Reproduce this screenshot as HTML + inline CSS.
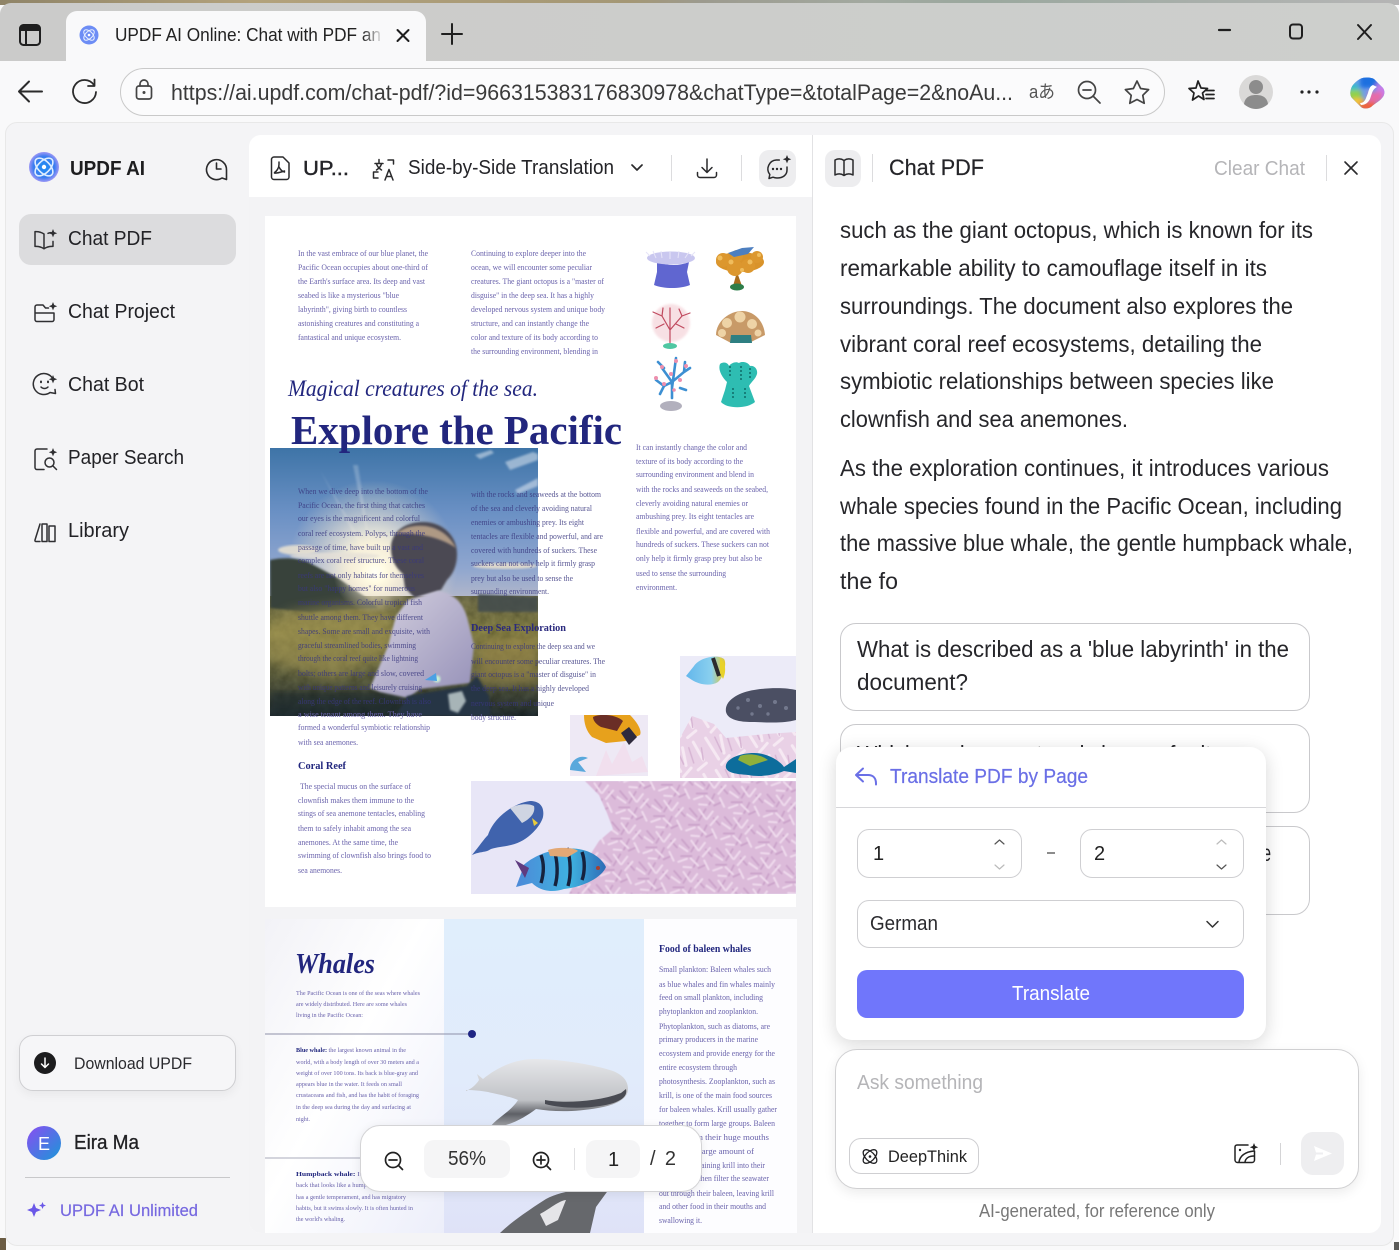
<!DOCTYPE html>
<html lang="en"><head><meta charset="utf-8"><title>UPDF AI Online: Chat with PDF</title>
<style>
html,body{margin:0;padding:0;background:#f9f9f9}
#w{position:relative;width:1399px;height:1250px;overflow:hidden;background:#f9f9fa;font-family:"Liberation Sans",sans-serif}
.a{position:absolute;box-sizing:border-box}
svg.l{position:absolute;left:0;top:0;width:1399px;height:1250px;pointer-events:none}
svg text{font-family:"Liberation Sans",sans-serif}
.pt text{font-family:"Liberation Serif",serif}
</style></head><body><div id="w">
<div class="a" style="left:0;top:0;width:1399px;height:5px;background:linear-gradient(90deg,#8f8468,#b3a27c 18%,#a49775 45%,#9c9a8e 50%,#a2a9a0 62%,#9aa89e 70%,#b5b5b5 100%)"></div>
<div class="a" style="left:0;top:3px;width:1399px;height:58px;background:linear-gradient(90deg,#cbcbca,#cdcfcc);border-radius:11px 11px 0 0"></div>
<div class="a" style="left:0;top:61px;width:1399px;height:1189px;background:#f9f9fa"></div>
<div class="a" style="left:66px;top:11px;width:360px;height:50px;background:#f9f9fa;border-radius:11px 11px 0 0"></div>
<div class="a" style="left:120px;top:68px;width:1045px;height:48px;border:1px solid #c9c9c9;border-radius:24px;background:#fbfbfc"></div>
<div class="a" style="left:0;top:1238px;width:6px;height:12px;background:#6b5c44"></div>
<div class="a" style="left:1394px;top:1242px;width:5px;height:8px;background:#5a5a58"></div>
<div class="a" style="left:5px;top:122px;width:1389px;height:1124px;background:#f4f4f6;border:1px solid #e8e8e8;border-radius:12px"></div>
<div class="a" style="left:249px;top:135px;width:1132px;height:1098px;background:#fff;border-radius:12px;overflow:hidden">
  <div class="a" style="left:0;top:0;width:563px;height:1098px;background:#f3f3f5"></div>
  <div class="a" style="left:0;top:0;width:563px;height:62px;background:#fff"></div>
  <div class="a" style="left:563px;top:0;width:1px;height:1098px;background:#e2e2e4"></div>
</div>
<div class="a" style="left:19px;top:214px;width:217px;height:51px;background:#dcdcde;border-radius:12px"></div>
<div class="a" style="left:19px;top:1035px;width:217px;height:56px;background:#f6f6f8;border:1px solid #cfcfd2;border-radius:14px;box-shadow:0 4px 10px rgba(0,0,0,.05)"></div>
<div class="a" style="left:25px;top:1177px;width:205px;height:1px;background:#c8c8ca"></div>

<!-- PDF pages -->
<svg class="l" viewBox="0 0 1399 1250" xmlns="http://www.w3.org/2000/svg">
<defs>
<linearGradient id="sky" x1="0" y1="0" x2="0" y2="1"><stop offset="0" stop-color="#3e74a7"/><stop offset=".4" stop-color="#6a90c4"/><stop offset=".75" stop-color="#8fa6cf"/><stop offset="1" stop-color="#bdbcc8"/></linearGradient>
<radialGradient id="sun"><stop offset="0" stop-color="#fffff6"/><stop offset=".25" stop-color="#fffbe2" stop-opacity=".98"/><stop offset=".55" stop-color="#f3e9d5" stop-opacity=".6"/><stop offset="1" stop-color="#e8dcc8" stop-opacity="0"/></radialGradient>
<linearGradient id="gr" x1="0" y1="0" x2="0" y2="1"><stop offset="0" stop-color="#77744f"/><stop offset=".3" stop-color="#8a8548"/><stop offset=".65" stop-color="#666744"/><stop offset="1" stop-color="#242f33"/></linearGradient>
<linearGradient id="shirt" x1="0" y1="0" x2="1" y2="1"><stop offset="0" stop-color="#d6d2e0"/><stop offset="1" stop-color="#9590b8"/></linearGradient>
<linearGradient id="left2" x1="0" y1="0" x2="1" y2="1"><stop offset="0" stop-color="#f2f2f7"/><stop offset=".45" stop-color="#fff"/><stop offset="1" stop-color="#eceefa"/></linearGradient>
<linearGradient id="mid2" x1="0" y1="0" x2="0" y2="1"><stop offset="0" stop-color="#e0eefc"/><stop offset=".5" stop-color="#e1ebfb"/><stop offset="1" stop-color="#dfe2f7"/></linearGradient>
<linearGradient id="whale" x1="0" y1="0" x2="0" y2="1"><stop offset="0" stop-color="#e6e7ea"/><stop offset=".6" stop-color="#bfc1c5"/><stop offset=".8" stop-color="#5e6066"/><stop offset="1" stop-color="#a9abb0"/></linearGradient>
<linearGradient id="fa" x1="0" y1="0" x2="1" y2="0"><stop offset="0" stop-color="#4c89d8"/><stop offset=".6" stop-color="#3fb2e0"/><stop offset="1" stop-color="#2d6cb6"/></linearGradient>
<linearGradient id="fb" x1="0" y1="0" x2="1" y2="0"><stop offset="0" stop-color="#63b7ec"/><stop offset=".65" stop-color="#8ad0ee"/><stop offset="1" stop-color="#e8c926"/></linearGradient>
<pattern id="cor" width="58" height="52" patternUnits="userSpaceOnUse" patternTransform="rotate(14) scale(.62)">
<rect width="58" height="52" fill="#dcbbda"/>
<g stroke-linecap="round" fill="none">
<g stroke="#cba3ca" stroke-width="3"><path d="M3 8l14 10M28 3l-6 20M44 14l12 8M8 34l16-4M36 28l-4 18M50 38l-10 8"/></g>
<g stroke="#eed9ec" stroke-width="3.400"><path d="M0 18l16 6M18 6l14 12M40 4l-6 14M50 10l-8 16M6 44l12-8M24 34l14 8M46 32l10 12M28 48l-12 2"/></g>
</g></pattern>
<pattern id="cor2" width="40" height="34" patternUnits="userSpaceOnUse" patternTransform="rotate(-18)">
<rect width="40" height="34" fill="#e9d1e6"/>
<g stroke-linecap="round" fill="none"><g stroke="#f6e9f3" stroke-width="3"><path d="M3 2l6 24M18 4l-2 18M30 2l4 20M10 32l10-6M26 30l10-4"/></g><g stroke="#d6b4d3" stroke-width="1.400"><path d="M12 4l2 16M24 6l0 16M36 10l-2 12"/></g></g></pattern>
<filter id="rough" x="0" y="0" width="100%" height="100%"><feTurbulence type="fractalNoise" baseFrequency=".1" numOctaves="3" seed="4"/><feColorMatrix values="0 0 0 0 .1  0 0 0 0 .12  0 0 0 0 .05  .75 0 0 0 -.12"/><feComposite in2="SourceGraphic" operator="in"/><feBlend in2="SourceGraphic" mode="multiply"/></filter>
<filter id="b1"><feGaussianBlur stdDeviation="1"/></filter>
<filter id="b3"><feGaussianBlur stdDeviation="3"/></filter>
<filter id="b6"><feGaussianBlur stdDeviation="6"/></filter>
<filter id="s"><feGaussianBlur stdDeviation=".35"/></filter>
<filter id="s2"><feGaussianBlur stdDeviation=".6"/></filter>
<clipPath id="cp1"><rect x="270" y="448" width="268" height="268"/></clipPath>
<clipPath id="cpA"><rect x="680" y="656" width="116" height="122"/></clipPath>
<clipPath id="cpB"><rect x="570" y="715" width="78" height="61"/></clipPath>
<clipPath id="cpC"><rect x="471" y="781" width="325" height="113"/></clipPath>
<clipPath id="cpP"><rect x="249" y="190" width="563" height="1043"/></clipPath>
</defs>
<g clip-path="url(#cpP)">
<rect x="265" y="216" width="532" height="691" fill="#fff"/>
<rect x="265" y="919" width="532" height="320" fill="#fff"/>
<rect x="265" y="919" width="179" height="320" fill="url(#left2)"/>
<rect x="444" y="919" width="200" height="320" fill="url(#mid2)"/>
<rect x="644" y="919" width="153" height="320" fill="#fdfdff"/>

<!-- photo -->
<g clip-path="url(#cp1)">
<rect x="270" y="448" width="268" height="160" fill="url(#sky)"/>
<g fill="#fff" opacity=".45" filter="url(#b1)"><path d="M475 455l16-5 3 3-14 6zM505 462l28-10 5 2v6l-28 10zM515 490l23-12v8l-20 8z"/></g>
<g fill="#fff" opacity=".22" filter="url(#b1)"><path d="M320 470l50 95 4-2zM373 565l-20-100 5 0z"/></g>
<circle cx="373" cy="565" r="85" fill="url(#sun)"/>
<rect x="270" y="596" width="268" height="120" fill="url(#gr)" filter="url(#rough)"/>
<path d="M270 560c14-3 28-2 38 2l30 16 26 18 14 12-70 4-38-4z" fill="#39433a" filter="url(#b1)"/>
<path d="M478 594l60 3v15h-60z" fill="#434b4e" opacity=".85" filter="url(#b1)"/>
<path d="M290 612l70-10 30 10 4 40-60 28-70-20v-30z" fill="#a89a55" opacity=".55" filter="url(#b6)"/>
<path d="M478 640l60-6v50h-60z" fill="#a18d4c" opacity=".6" filter="url(#b6)"/>
<path d="M270 692h130v24H270z" fill="#1f2b2e" opacity=".55" filter="url(#b3)"/>
<circle cx="375" cy="572" r="42" fill="url(#sun)"/>
<ellipse cx="298" cy="550" rx="20" ry="5" fill="#ece4d2" opacity=".85" filter="url(#b1)"/>
<ellipse cx="335" cy="556" rx="45" ry="3.500" fill="#e6e1d8" opacity=".8" filter="url(#b1)"/>
<ellipse cx="505" cy="566" rx="32" ry="3" fill="#ece2cc" opacity=".85" filter="url(#b1)"/>
<path d="M391 548c0-16 14-26 32-26 20 0 34 14 34 32 0 12-4 20-10 26l-6 10-26 8-10-10-2-14c-7-6-12-14-12-26z" fill="#4b4a52" filter="url(#b1)"/>
<path d="M396 534c12-12 46-14 60 14-14-10-38-16-60-14z" fill="#b9a28a" opacity=".9" filter="url(#b1)"/>
<path d="M408 600l30-9c16 2 26 12 30 30l6 24-4 38-50 6-12 9-28-6-10-4 18-42 8-30z" fill="url(#shirt)" filter="url(#b1)"/>
<path d="M407 696l60-10 10-10 12 20 2 20H396z" fill="#263445" filter="url(#b1)"/>
<path d="M448 694l14-3 4 10-8 12-8-3z" fill="#c8d4d4" opacity=".8" filter="url(#b1)"/>
<circle cx="437" cy="679" r="3.500" fill="#c9f2d6" filter="url(#b1)"/>
<path d="M425 680l11-7 1 8z" fill="#4ba0e4"/>
</g>

<!-- corals -->
<g filter="url(#s)">
<path d="M657 262c12 4 22 4 32 0l-2 10 3 13c-10 4-26 4-36 0l3-13z" fill="#6166d0"/>
<ellipse cx="671" cy="258" rx="24" ry="6.500" fill="#c9c7ef"/>
<g stroke="#e6e4f8" stroke-width="1" fill="none"><path d="M650 256l-4-4M656 258l-3-7M662 258l-1-7M670 259v-8M678 258l1-7M685 258l4-6M691 256l4-4"/></g>
<path d="M737 272l5 14h-9z" fill="#a86c1f"/><ellipse cx="737" cy="287" rx="7" ry="3.500" fill="#2d7d4a"/>
<ellipse cx="740" cy="262" rx="24" ry="10" fill="#d9932c"/>
<g fill="#dc972f"><circle cx="723" cy="260" r="7"/><circle cx="735" cy="268" r="8"/><circle cx="748" cy="266" r="7"/><circle cx="757" cy="257" r="6"/><circle cx="737" cy="256" r="6"/></g>
<g fill="#f0bd5d"><circle cx="720" cy="258" r="2.500"/><circle cx="731" cy="262" r="2.500"/><circle cx="750" cy="262" r="2.500"/><circle cx="759" cy="255" r="2"/><circle cx="742" cy="270" r="2"/></g>
<path d="M728 253l14-5 12-1-6 7-14 3z" fill="#4d7fc0"/>
<circle cx="671" cy="323" r="19" fill="#f6d9de" opacity=".8" filter="url(#b1)"/>
<g stroke="#c04a5e" stroke-width="1.200" fill="none" stroke-linecap="round"><path d="M670 344v-14l-8-14M670 330l12-14M662 316l-9-4M662 316l1-8M682 316l8-3M682 316l-3-7M670 330v-22M656 328l8-4M684 328l-8-4"/></g>
<ellipse cx="670" cy="346" rx="7" ry="3" fill="#4fc7a2"/>
<path d="M716 335c0-14 14-24 26-24s22 10 23 24l-16 8h-18z" fill="#c89a67"/>
<g fill="#eed3a6"><circle cx="727" cy="323" r="5"/><circle cx="740" cy="317" r="5.500"/><circle cx="752" cy="324" r="5"/><circle cx="722" cy="333" r="4"/><circle cx="758" cy="333" r="3.500"/></g>
<path d="M731 335h20l1 8h-22z" fill="#2d7f82"/>
<g stroke="#3d8fd2" stroke-width="2.600" fill="none" stroke-linecap="round"><path d="M672 398v-16l-10-14M672 382l12-10 1-10M672 382l-8 4-8-6M684 372l6-4M664 368l-6-6M672 388l4-30M664 386l-4 8M680 388l6 2"/></g>
<g fill="#ee8fad"><circle cx="662" cy="367" r="2"/><circle cx="676" cy="361" r="2"/><circle cx="686" cy="366" r="2"/><circle cx="656" cy="378" r="2"/><circle cx="671" cy="374" r="2"/><circle cx="680" cy="380" r="2"/><circle cx="664" cy="384" r="2"/><circle cx="674" cy="390" r="1.800"/></g>
<ellipse cx="671" cy="406" rx="11" ry="5" fill="#b2b0bd"/>
<path d="M727 382c-6-6-9-13-7-18 4-3 8-1 9 2 2-3 7-5 10-3 3-2 9-1 11 3 4-1 8 3 7 8-2 6-6 8-8 12l6 16c-8 7-28 7-34 0l4-12z" fill="#2ebdb2"/>
<path d="M730 366v12M741 366v14M750 368v12M733 388v10M745 388v10" stroke="#157f7a" stroke-width="2" stroke-dasharray="2 2"/>
</g>

<!-- fish A -->
<g clip-path="url(#cpA)" filter="url(#s)">
<rect x="680" y="656" width="116" height="122" fill="#ecebf8"/>
<path d="M680 778v-40l12-22 22 8 12 14 40-4 30-2v46z" fill="url(#cor2)"/>
<path d="M686 676l8-10c6-9 24-12 30-7 3 4 0 18-6 23-8 5-20 2-26-2z" fill="url(#fb)"/>
<path d="M713 658l6 18" stroke="#2b2b2e" stroke-width="4"/><path d="M720 658c5 4 7 12 3 21l-3-6z" fill="#e8d22a"/>
<path d="M726 712c-2-12 14-20 28-22 18-3 34-2 42 0v30c-14 4-32 2-44 2-12 0-24-2-26-10z" fill="#4b5063"/>
<g fill="#7d8398" opacity=".8"><circle cx="748" cy="700" r="2"/><circle cx="760" cy="706" r="2"/><circle cx="775" cy="702" r="2"/><circle cx="738" cy="708" r="1.700"/><circle cx="768" cy="714" r="1.700"/><circle cx="786" cy="708" r="2"/><circle cx="752" cy="714" r="1.700"/></g>
<path d="M726 768c-2-8 12-15 28-15 14 0 26 8 30 14l12-8v14l-12-2c-12 5-26 6-36 4-12-1-20-2-22-7z" fill="#0f6d9c"/>
<path d="M740 756c8-3 20-2 28 4l-18 6-12-6z" fill="#8fb03a"/>
</g>
<!-- fish B -->
<g clip-path="url(#cpB)" filter="url(#s)">
<rect x="570" y="715" width="78" height="61" fill="#eee9f5"/>
<path d="M584 715h46c8 8 12 16 10 20l-14 6-20 2-14-6c-6-6-8-14-8-22z" fill="#e7a11a"/>
<path d="M593 717c8-4 24-2 30 4l-6 10-16-4c-4-2-8-6-8-10z" fill="#6b2f26"/>
<path d="M621 733l8-6 8 10-8 8z" fill="#2e2a3c"/>
<path d="M596 776l10-26 6 14 12-22 8 20 10-6 6 16z" fill="#f1dfee"/>
<path d="M570 770c0-10 10-16 18-12l-10 4 8 10z" fill="#5aa8dc"/>
</g>
<!-- image C -->
<g clip-path="url(#cpC)" filter="url(#s)">
<rect x="471" y="781" width="325" height="113" fill="#e8e6f7"/>
<path d="M796 781H585l14 14 8 18 6 16-14 12-14 22-16 31h227z" fill="url(#cor)" filter="url(#s2)"/>
<path d="M472 855c8-10 12-16 16-20 6-18 26-32 42-34 8 0 15 4 13 16-2 8-14 24-32 28-8 2-14 2-20 4-6 4-10 2-19 6z" fill="#3f64ad"/>
<path d="M510 808c8-4 18-5 24-2 2 8-6 14-12 17z" fill="#cfd5e2"/>
<path d="M532 818l6 5-4 3z" fill="#e8cb3c"/>
<path d="M520 869c6-8 22-18 42-20 22-3 38 6 44 18-4 10-22 20-42 22-12 4-24 2-32-6l-16 4 6-16z" fill="url(#fa)"/>
<path d="M515 860l14 8-4 10z" fill="#5f3a80"/>
<g stroke="#14203e" stroke-width="3.400" fill="none"><path d="M541 855c3 8 3 18 0 28M554 850c4 12 4 26 1 36M567 848c4 12 4 28 1 38M582 852c3 8 3 20 0 28"/></g>
<path d="M548 850c8-3 26-3 30 1l-10 6-18-1z" fill="#e3a874"/>
<circle cx="598" cy="868" r="2" fill="#a64130"/>
</g>
<rect x="796" y="216" width="16" height="700" fill="#f3f3f5"/>

<!-- whales -->
<g filter="url(#s)">
<path d="M466 1091c5-2 10-6 13-11l-2-6 6 5c12-10 30-20 52-20 26 0 60 6 78 12 10 4 15 10 15 18 0 10-12 16-30 19-22 4-44 4-62 1-8 6-20 14-34 17-6 2-10 2-12 1 6-8 18-14 26-24l2-3c-10-4-22-6-30-8-6-1-14-2-22-2z" fill="url(#whale)"/>
<path d="M545 1100c14 3 50 3 76-7l5-4c2 8-6 14-26 17-20 3-40 2-55-2z" fill="#4a4c52"/>
<path d="M500 1233c8-8 24-20 46-34 18-10 46-10 66-14l-16 22-6 26z" fill="#66676c"/>
<path d="M540 1214c8-4 20-14 26-14l-8 20-12 6z" fill="#e5e5e8"/>
</g>
<path d="M265 1034H472" stroke="#8e90a8" stroke-width="1"/><circle cx="472" cy="1034" r="4" fill="#1e2583"/>
<path d="M265 1158H444" stroke="#a9abbb" stroke-width="1"/>

<!-- titles -->
<g class="pt" fill="#22287e" filter="url(#s)">
<text x="288" y="396" font-size="23.500" font-style="italic" textLength="250" lengthAdjust="spacingAndGlyphs">Magical creatures of the sea.</text>
<text x="291" y="444" font-size="41" font-weight="bold" textLength="331" lengthAdjust="spacingAndGlyphs">Explore the Pacific</text>
<text x="295" y="973" font-size="28" font-weight="bold" font-style="italic" textLength="80" lengthAdjust="spacingAndGlyphs">Whales</text>
<text x="298" y="769" font-size="10" font-weight="bold" textLength="48" lengthAdjust="spacingAndGlyphs">Coral Reef</text>
<text x="471" y="631" font-size="10" font-weight="bold" fill="#2b2a7e" textLength="95" lengthAdjust="spacingAndGlyphs">Deep Sea Exploration</text>
<text x="659" y="952" font-size="10" font-weight="bold" textLength="92" lengthAdjust="spacingAndGlyphs">Food of baleen whales</text>
</g>

<!-- body text -->
<g class="pt" fill="#6a63ac" font-size="8" filter="url(#s)">
<text x="298" y="256" textLength="130" lengthAdjust="spacingAndGlyphs">In the vast embrace of our blue planet, the</text>
<text x="298" y="270" textLength="130" lengthAdjust="spacingAndGlyphs">Pacific Ocean occupies about one-third of</text>
<text x="298" y="284" textLength="127" lengthAdjust="spacingAndGlyphs">the Earth's surface area. Its deep and vast</text>
<text x="298" y="298" textLength="101" lengthAdjust="spacingAndGlyphs">seabed is like a mysterious "blue</text>
<text x="298" y="312" textLength="109" lengthAdjust="spacingAndGlyphs">labyrinth", giving birth to countless</text>
<text x="298" y="326" textLength="121" lengthAdjust="spacingAndGlyphs">astonishing creatures and constituting a</text>
<text x="298" y="340" textLength="103" lengthAdjust="spacingAndGlyphs">fantastical and unique ecosystem.</text>
<text x="471" y="256" textLength="115" lengthAdjust="spacingAndGlyphs">Continuing to explore deeper into the</text>
<text x="471" y="270" textLength="121" lengthAdjust="spacingAndGlyphs">ocean, we will encounter some peculiar</text>
<text x="471" y="284" textLength="133" lengthAdjust="spacingAndGlyphs">creatures. The giant octopus is a "master of</text>
<text x="471" y="298" textLength="123" lengthAdjust="spacingAndGlyphs">disguise" in the deep sea. It has a highly</text>
<text x="471" y="312" textLength="134" lengthAdjust="spacingAndGlyphs">developed nervous system and unique body</text>
<text x="471" y="326" textLength="118" lengthAdjust="spacingAndGlyphs">structure, and can instantly change the</text>
<text x="471" y="340" textLength="127" lengthAdjust="spacingAndGlyphs">color and texture of its body according to</text>
<text x="471" y="354" textLength="127" lengthAdjust="spacingAndGlyphs">the surrounding environment, blending in</text>
<text x="636" y="450" textLength="111" lengthAdjust="spacingAndGlyphs">It can instantly change the color and</text>
<text x="636" y="464" textLength="107" lengthAdjust="spacingAndGlyphs">texture of its body according to the</text>
<text x="636" y="477" textLength="118" lengthAdjust="spacingAndGlyphs">surrounding environment and blend in</text>
<text x="636" y="492" textLength="132" lengthAdjust="spacingAndGlyphs">with the rocks and seaweeds on the seabed,</text>
<text x="636" y="506" textLength="112" lengthAdjust="spacingAndGlyphs">cleverly avoiding natural enemies or</text>
<text x="636" y="519" textLength="118" lengthAdjust="spacingAndGlyphs">ambushing prey. Its eight tentacles are</text>
<text x="636" y="534" textLength="134" lengthAdjust="spacingAndGlyphs">flexible and powerful, and are covered with</text>
<text x="636" y="547" textLength="133" lengthAdjust="spacingAndGlyphs">hundreds of suckers. These suckers can not</text>
<text x="636" y="561" textLength="126" lengthAdjust="spacingAndGlyphs">only help it firmly grasp prey but also be</text>
<text x="636" y="576" textLength="90" lengthAdjust="spacingAndGlyphs">used to sense the surrounding</text>
<text x="636" y="590" textLength="41" lengthAdjust="spacingAndGlyphs">environment.</text>
<g fill="#39377f" opacity=".85">
<text x="298" y="494" textLength="130" lengthAdjust="spacingAndGlyphs">When we dive deep into the bottom of the</text>
<text x="298" y="508" textLength="127" lengthAdjust="spacingAndGlyphs">Pacific Ocean, the first thing that catches</text>
<text x="298" y="521" textLength="122" lengthAdjust="spacingAndGlyphs">our eyes is the magnificent and colorful</text>
<text x="298" y="536" textLength="127" lengthAdjust="spacingAndGlyphs">coral reef ecosystem. Polyps, through the</text>
<text x="298" y="550" textLength="125" lengthAdjust="spacingAndGlyphs">passage of time, have built up a vast and</text>
<text x="298" y="563" textLength="126" lengthAdjust="spacingAndGlyphs">complex coral reef structure. These coral</text>
<text x="298" y="578" textLength="126" lengthAdjust="spacingAndGlyphs">reefs are not only habitats for themselves</text>
<text x="298" y="591" textLength="117" lengthAdjust="spacingAndGlyphs">but also "happy homes" for numerous</text>
<text x="298" y="605" textLength="124" lengthAdjust="spacingAndGlyphs">marine organisms. Colorful tropical fish</text>
<text x="298" y="620" textLength="125" lengthAdjust="spacingAndGlyphs">shuttle among them. They have different</text>
<text x="298" y="634" textLength="132" lengthAdjust="spacingAndGlyphs">shapes. Some are small and exquisite, with</text>
<text x="298" y="648" textLength="118" lengthAdjust="spacingAndGlyphs">graceful streamlined bodies, swimming</text>
<text x="298" y="661" textLength="120" lengthAdjust="spacingAndGlyphs">through the coral reef quite like lightning</text>
<text x="298" y="676" textLength="126" lengthAdjust="spacingAndGlyphs">bolts; others are large and slow, covered</text>
<text x="298" y="690" textLength="124" lengthAdjust="spacingAndGlyphs">with unique patterns and leisurely cruising</text>
<text x="298" y="704" textLength="133" lengthAdjust="spacingAndGlyphs">along the edge of the reef. Clownfish is also</text>
<text x="471" y="497" textLength="130" lengthAdjust="spacingAndGlyphs">with the rocks and seaweeds at the bottom</text>
<text x="471" y="511" textLength="121" lengthAdjust="spacingAndGlyphs">of the sea and cleverly avoiding natural</text>
<text x="471" y="525" textLength="113" lengthAdjust="spacingAndGlyphs">enemies or ambushing prey. Its eight</text>
<text x="471" y="539" textLength="132" lengthAdjust="spacingAndGlyphs">tentacles are flexible and powerful, and are</text>
<text x="471" y="553" textLength="126" lengthAdjust="spacingAndGlyphs">covered with hundreds of suckers. These</text>
<text x="471" y="566" textLength="124" lengthAdjust="spacingAndGlyphs">suckers can not only help it firmly grasp</text>
<text x="471" y="581" textLength="102" lengthAdjust="spacingAndGlyphs">prey but also be used to sense the</text>
<text x="471" y="594" textLength="78" lengthAdjust="spacingAndGlyphs">surrounding environment.</text>
<text x="471" y="649" textLength="124" lengthAdjust="spacingAndGlyphs">Continuing to explore the deep sea and we</text>
<text x="471" y="664" textLength="134" lengthAdjust="spacingAndGlyphs">will encounter some peculiar creatures. The</text>
<text x="471" y="677" textLength="125" lengthAdjust="spacingAndGlyphs">giant octopus is a "master of disguise" in</text>
<text x="471" y="691" textLength="118" lengthAdjust="spacingAndGlyphs">the deep sea. It has a highly developed</text>
<text x="471" y="706" textLength="83" lengthAdjust="spacingAndGlyphs">nervous system and unique</text>
</g>
<text x="471" y="720" textLength="45" lengthAdjust="spacingAndGlyphs">body structure.</text>
<text x="298" y="717" textLength="124" lengthAdjust="spacingAndGlyphs">a wise tenant among them. They have</text>
<text x="298" y="730" textLength="132" lengthAdjust="spacingAndGlyphs">formed a wonderful symbiotic relationship</text>
<text x="298" y="745" textLength="60" lengthAdjust="spacingAndGlyphs">with sea anemones.</text>
<text x="300" y="789" textLength="111" lengthAdjust="spacingAndGlyphs">The special mucus on the surface of</text>
<text x="298" y="803" textLength="116" lengthAdjust="spacingAndGlyphs">clownfish makes them immune to the</text>
<text x="298" y="816" textLength="127" lengthAdjust="spacingAndGlyphs">stings of sea anemone tentacles, enabling</text>
<text x="298" y="831" textLength="113" lengthAdjust="spacingAndGlyphs">them to safely inhabit among the sea</text>
<text x="298" y="845" textLength="100" lengthAdjust="spacingAndGlyphs">anemones. At the same time, the</text>
<text x="298" y="858" textLength="133" lengthAdjust="spacingAndGlyphs">swimming of clownfish also brings food to</text>
<text x="298" y="873" textLength="44" lengthAdjust="spacingAndGlyphs">sea anemones.</text>
<text x="659" y="972" textLength="112" lengthAdjust="spacingAndGlyphs">Small plankton: Baleen whales such</text>
<text x="659" y="987" textLength="116" lengthAdjust="spacingAndGlyphs">as blue whales and fin whales mainly</text>
<text x="659" y="1000" textLength="104" lengthAdjust="spacingAndGlyphs">feed on small plankton, including</text>
<text x="659" y="1014" textLength="99" lengthAdjust="spacingAndGlyphs">phytoplankton and zooplankton.</text>
<text x="659" y="1029" textLength="111" lengthAdjust="spacingAndGlyphs">Phytoplankton, such as diatoms, are</text>
<text x="659" y="1042" textLength="99" lengthAdjust="spacingAndGlyphs">primary producers in the marine</text>
<text x="659" y="1056" textLength="116" lengthAdjust="spacingAndGlyphs">ecosystem and provide energy for the</text>
<text x="659" y="1070" textLength="78" lengthAdjust="spacingAndGlyphs">entire ecosystem through</text>
<text x="659" y="1084" textLength="116" lengthAdjust="spacingAndGlyphs">photosynthesis. Zooplankton, such as</text>
<text x="659" y="1098" textLength="113" lengthAdjust="spacingAndGlyphs">krill, is one of the main food sources</text>
<text x="659" y="1112" textLength="118" lengthAdjust="spacingAndGlyphs">for baleen whales. Krill usually gather</text>
<text x="659" y="1126" textLength="116" lengthAdjust="spacingAndGlyphs">together to form large groups. Baleen</text>
<text x="659" y="1140" textLength="110" lengthAdjust="spacingAndGlyphs">whales open their huge mouths</text>
<text x="659" y="1154" textLength="95" lengthAdjust="spacingAndGlyphs">to take in a large amount of</text>
<text x="659" y="1168" textLength="106" lengthAdjust="spacingAndGlyphs">seawater containing krill into their</text>
<text x="659" y="1181" textLength="110" lengthAdjust="spacingAndGlyphs">mouths, and then filter the seawater</text>
<text x="659" y="1196" textLength="115" lengthAdjust="spacingAndGlyphs">out through their baleen, leaving krill</text>
<text x="659" y="1209" textLength="107" lengthAdjust="spacingAndGlyphs">and other food in their mouths and</text>
<text x="659" y="1223" textLength="43" lengthAdjust="spacingAndGlyphs">swallowing it.</text>
<g font-size="5.800">
<text x="296" y="995" textLength="124" lengthAdjust="spacingAndGlyphs">The Pacific Ocean is one of the seas where whales</text>
<text x="296" y="1006" textLength="111" lengthAdjust="spacingAndGlyphs">are widely distributed. Here are some whales</text>
<text x="296" y="1017" textLength="67" lengthAdjust="spacingAndGlyphs">living in the Pacific Ocean:</text>
<text x="296" y="1052" textLength="110" lengthAdjust="spacingAndGlyphs"><tspan font-weight="bold" fill="#22287e">Blue whale:</tspan> the largest known animal in the</text>
<text x="296" y="1064" textLength="123" lengthAdjust="spacingAndGlyphs">world, with a body length of over 30 meters and a</text>
<text x="296" y="1075" textLength="122" lengthAdjust="spacingAndGlyphs">weight of over 100 tons. Its back is blue-gray and</text>
<text x="296" y="1086" textLength="106" lengthAdjust="spacingAndGlyphs">appears blue in the water. It feeds on small</text>
<text x="296" y="1097" textLength="123" lengthAdjust="spacingAndGlyphs">crustaceans and fish, and has the habit of foraging</text>
<text x="296" y="1109" textLength="115" lengthAdjust="spacingAndGlyphs">in the deep sea during the day and surfacing at</text>
<text x="296" y="1121" textLength="14" lengthAdjust="spacingAndGlyphs">night.</text>
<text x="296" y="1176" textLength="100" lengthAdjust="spacingAndGlyphs"><tspan font-weight="bold" fill="#22287e">Humpback whale:</tspan> It has a large</text>
<text x="296" y="1187" textLength="110" lengthAdjust="spacingAndGlyphs">back that looks like a hump. It is very long</text>
<text x="296" y="1199" textLength="110" lengthAdjust="spacingAndGlyphs">has a gentle temperament, and has migratory</text>
<text x="296" y="1210" textLength="117" lengthAdjust="spacingAndGlyphs">habits, but it swims slowly. It is often hunted in</text>
<text x="296" y="1221" textLength="49" lengthAdjust="spacingAndGlyphs">the world's whaling.</text>
</g>
</g>
</g>
</svg>

<!-- zoom bar -->
<div class="a" style="left:360px;top:1125px;width:342px;height:67px;background:#fff;border:1px solid #d4d4d6;border-radius:20px;box-shadow:0 2px 10px rgba(0,0,0,.08)"></div>
<div class="a" style="left:424px;top:1140px;width:86px;height:38px;background:#f5f5f6;border-radius:10px"></div>
<div class="a" style="left:586px;top:1140px;width:54px;height:38px;background:#f5f5f6;border-radius:10px"></div>
<div class="a" style="left:574px;top:1148px;width:1px;height:22px;background:#e0e0e2"></div>

<!-- chat question cards -->
<div class="a" style="left:840px;top:623px;width:470px;height:88px;border:1px solid #c9c9cc;border-radius:16px;background:#fff"></div>
<div class="a" style="left:840px;top:724px;width:470px;height:89px;border:1px solid #c9c9cc;border-radius:16px;background:#fff"></div>
<div class="a" style="left:840px;top:826px;width:470px;height:89px;border:1px solid #c9c9cc;border-radius:16px;background:#fff"></div>

<svg class="l" viewBox="0 0 1399 1250" xmlns="http://www.w3.org/2000/svg">
<g fill="#26262a" font-size="23">
<text x="840" y="238" textLength="473" lengthAdjust="spacingAndGlyphs">such as the giant octopus, which is known for its</text>
<text x="840" y="276" textLength="427" lengthAdjust="spacingAndGlyphs">remarkable ability to camouflage itself in its</text>
<text x="840" y="314" textLength="453" lengthAdjust="spacingAndGlyphs">surroundings. The document also explores the</text>
<text x="840" y="352" textLength="422" lengthAdjust="spacingAndGlyphs">vibrant coral reef ecosystems, detailing the</text>
<text x="840" y="389" textLength="434" lengthAdjust="spacingAndGlyphs">symbiotic relationships between species like</text>
<text x="840" y="427" textLength="288" lengthAdjust="spacingAndGlyphs">clownfish and sea anemones.</text>
<text x="840" y="476" textLength="489" lengthAdjust="spacingAndGlyphs">As the exploration continues, it introduces various</text>
<text x="840" y="514" textLength="502" lengthAdjust="spacingAndGlyphs">whale species found in the Pacific Ocean, including</text>
<text x="840" y="551" textLength="513" lengthAdjust="spacingAndGlyphs">the massive blue whale, the gentle humpback whale,</text>
<text x="840" y="589" textLength="58" lengthAdjust="spacingAndGlyphs">the fo</text>
<text x="857" y="657" textLength="432" lengthAdjust="spacingAndGlyphs">What is described as a 'blue labyrinth' in the</text>
<text x="857" y="690" textLength="111" lengthAdjust="spacingAndGlyphs">document?</text>
<text x="857" y="762" textLength="365" lengthAdjust="spacingAndGlyphs">Which marine creature is known for its</text>
<text x="857" y="861" textLength="414" lengthAdjust="spacingAndGlyphs">What are the main types of species on the reef and the shore</text>
</g>
</svg>

<!-- modal -->
<div class="a" style="left:836px;top:747px;width:430px;height:293px;background:#fff;border-radius:16px;box-shadow:0 4px 18px rgba(0,0,0,.16)"></div>
<div class="a" style="left:836px;top:807px;width:430px;height:1px;background:#d6d6d9"></div>
<div class="a" style="left:857px;top:829px;width:165px;height:49px;border:1px solid #cfcfd2;border-radius:12px"></div>
<div class="a" style="left:1080px;top:829px;width:164px;height:49px;border:1px solid #cfcfd2;border-radius:12px"></div>
<div class="a" style="left:857px;top:900px;width:387px;height:48px;border:1px solid #cfcfd2;border-radius:12px"></div>
<div class="a" style="left:857px;top:970px;width:387px;height:48px;background:#7076fb;border-radius:10px"></div>
<!-- ask box -->
<div class="a" style="left:835px;top:1049px;width:524px;height:140px;background:#fff;border:1px solid #d0d0d2;border-radius:22px;box-shadow:0 4px 12px rgba(0,0,0,.08)"></div>
<div class="a" style="left:849px;top:1138px;width:130px;height:36px;border:1px solid #cfcfd2;border-radius:12px"></div>
<div class="a" style="left:1301px;top:1132px;width:43px;height:43px;background:#eeeef0;border-radius:12px"></div>
<!-- header buttons -->
<div class="a" style="left:759px;top:150px;width:37px;height:37px;background:#ededef;border-radius:10px"></div>
<div class="a" style="left:825px;top:150px;width:36px;height:37px;background:#ededef;border-radius:10px"></div>

<svg class="l" viewBox="0 0 1399 1250" xmlns="http://www.w3.org/2000/svg">
<defs>
<linearGradient id="tabf" x1="0" y1="0" x2="1" y2="0"><stop offset="0" stop-color="#f9f9fa" stop-opacity="0"/><stop offset="1" stop-color="#f9f9fa"/></linearGradient>
<radialGradient id="lg"><stop offset="0" stop-color="#1d8df2"/><stop offset=".72" stop-color="#3d7df0"/><stop offset="1" stop-color="#8a86f5" stop-opacity=".85"/></radialGradient>
<linearGradient id="eg" x1="0" y1="0" x2="1" y2="1"><stop offset="0" stop-color="#8a4df2"/><stop offset="1" stop-color="#1a97d8"/></linearGradient>
<filter id="bb" x="-20%" y="-20%" width="140%" height="140%"><feGaussianBlur stdDeviation="2"/></filter>
<clipPath id="cop"><path d="M1361 78.500c3-1.500 12-1.500 14 1.500l8 8c2 3 2 7-1 10-2 3-8 6-11 9-3 2-8 2-10 0l-9-9c-2-2-2-6-1-9 1-4 5-8 10-10.500z"/></clipPath>
</defs>

<!-- browser chrome -->
<g fill="none" stroke="#1f1f1f" stroke-width="2" stroke-linecap="round" stroke-linejoin="round">
<rect x="20" y="25" width="20" height="20" rx="3.500"/><path d="M21 30v-1.500a3.500 3.500 0 0 1 3.500-3.500h11a3.500 3.500 0 0 1 3.500 3.500V30z" fill="#1f1f1f"/><path d="M26 31v14"/>
<path d="M397.500 30l11 11M408.500 30l-11 11"/>
<path d="M452 24v20M442 34h20"/>
<path d="M42 91.500H19M29 81.500l-10 10 10 10" stroke="#2b2b2b"/>
<path d="M94 85A11.500 11.500 0 1 0 96 92" stroke="#2b2b2b" stroke-width="1.800"/><path d="M94.500 79.500v6.500h-6.500" stroke="#2b2b2b" stroke-width="1.800"/>
<path d="M1219 30h11" stroke-width="2.200"/><rect x="1290" y="24.500" width="12" height="14" rx="3"/>
<path d="M1358 25l13 14M1371 25l-13 14"/>
</g>
<g fill="none" stroke="#444" stroke-width="1.700" stroke-linejoin="round" stroke-linecap="round">
<rect x="136.500" y="86" width="15" height="13" rx="2.500"/><path d="M140 86v-2a4 4 0 0 1 8 0v2"/>
<circle cx="1087" cy="90" r="8.500"/><path d="M1083 90h8M1093.500 96.500l6.500 6.500"/>
<path d="M1137 81l3.600 7.500 8 1.100-5.800 5.700 1.400 8-7.200-3.800-7.200 3.800 1.400-8-5.800-5.700 8-1.100z"/>
<path d="M1198 81l3 7 6.500.5-5 4.500 1.500 6.500-5.500-3.500-6 4 1.500-7-5-4.500 7-.5z" stroke="#222"/>
<path d="M1206 90.500h8M1206 94.500h8M1206 98.500h8" stroke="#222"/>
</g>
<circle cx="144" cy="92.500" r="1.500" fill="#444"/>
<text x="1029" y="98" font-size="18" fill="#555" style="font-family:'Liberation Sans','Noto Sans CJK JP',sans-serif" textLength="26" lengthAdjust="spacingAndGlyphs">aあ</text>
<circle cx="89" cy="35" r="9.500" fill="#6d8df5"/><g fill="none" stroke="#e8f0ff" stroke-width="1"><ellipse cx="89" cy="35" rx="6.500" ry="3.500" transform="rotate(45 89 35)"/><ellipse cx="89" cy="35" rx="6.500" ry="3.500" transform="rotate(-45 89 35)"/></g><circle cx="89" cy="35" r="1.300" fill="#fff"/>
<text x="115" y="41" font-size="18" fill="#222" textLength="266" lengthAdjust="spacingAndGlyphs">UPDF AI Online: Chat with PDF an</text>
<rect x="362" y="22" width="22" height="24" fill="url(#tabf)"/>
<text x="171" y="100" font-size="22" fill="#3a3a3a" textLength="842" lengthAdjust="spacingAndGlyphs">https://ai.updf.com/chat-pdf/?id=966315383176830978&amp;chatType=&amp;totalPage=2&amp;noAu...</text>
<circle cx="1256" cy="92" r="17" fill="#dad9d8"/>
<circle cx="1256" cy="87" r="7" fill="#8c8c8c"/><path d="M1244 104c1-7 6-9 12-9s11 2 12 9c-3 3-8 5-12 5s-9-2-12-5z" fill="#8c8c8c"/>
<circle cx="1302" cy="92" r="1.600" fill="#222"/><circle cx="1309" cy="92" r="1.600" fill="#222"/><circle cx="1317" cy="92" r="1.600" fill="#222"/>
<!-- copilot -->
<g clip-path="url(#cop)">
<rect x="1348" y="75" width="40" height="36" fill="#6f9fe8"/>
<g filter="url(#bb)">
<rect x="1360" y="74" width="18" height="14" fill="#1f6fe0"/>
<rect x="1348" y="84" width="10" height="8" fill="#2fc0c8"/>
<rect x="1348" y="90" width="13" height="9" fill="#8fd24a"/>
<rect x="1352" y="98" width="12" height="8" fill="#f3c23a"/>
<rect x="1360" y="102" width="16" height="9" fill="#f0603a"/>
<rect x="1376" y="84" width="12" height="14" fill="#c77be8"/>
<rect x="1368" y="92" width="14" height="10" fill="#e76aa8"/>
</g>
<path d="M1373 85c-3 1-4 4-5 8l-2 5c-1 3-3 5-6 5l1 2c4 0 7-2 9-6l2-6c1-3 3-5 5-6z" fill="#fdfdff"/>
</g>

<!-- logo -->
<circle cx="44" cy="167" r="15" fill="url(#lg)"/>
<g fill="none" stroke="#dfeeff" stroke-width="1.600"><ellipse cx="44" cy="167" rx="11" ry="6" transform="rotate(45 44 167)"/><ellipse cx="44" cy="167" rx="11" ry="6" transform="rotate(-45 44 167)"/></g>
<circle cx="44" cy="167" r="2.200" fill="#fff"/>
<text x="70" y="175" font-size="20" font-weight="bold" fill="#1d1d1f" textLength="75" lengthAdjust="spacingAndGlyphs">UPDF AI</text>

<!-- history icon -->
<g fill="none" stroke="#2a2a2c" stroke-width="1.600" stroke-linecap="round" stroke-linejoin="round">
<path d="M226.500 170a10 10 0 1 0-4.500 8l4.500 1.500z"/><path d="M216.500 163v6h4.500"/>
</g>

<!-- sidebar nav -->
<g fill="#222226" font-size="20">
<text x="68" y="245" textLength="84" lengthAdjust="spacingAndGlyphs">Chat PDF</text>
<text x="68" y="318" textLength="107" lengthAdjust="spacingAndGlyphs">Chat Project</text>
<text x="68" y="391" textLength="76" lengthAdjust="spacingAndGlyphs">Chat Bot</text>
<text x="68" y="464" textLength="116" lengthAdjust="spacingAndGlyphs">Paper Search</text>
<text x="68" y="537" textLength="61" lengthAdjust="spacingAndGlyphs">Library</text>
</g>
<g fill="none" stroke="#2f2f32" stroke-width="1.500" stroke-linecap="round" stroke-linejoin="round">
<path d="M44 234c-2.500-1.800-5-2.600-9-2.400v14.800c4-.2 6.500.6 9 2.400 2.500-1.800 5-2.600 9-2.400v-5M44 234v14.800M48 233.300c1-.4 2-.6 3-.7"/>
<path d="M35 307v12.500a2 2 0 0 0 2 2h15a2 2 0 0 0 2-2V313H35m0-1v-5a2 2 0 0 1 2-2h6l2.500 3h3"/>
<path d="M53 379a10.500 10.500 0 1 0-3 13.500l5.500 1-.5-4"/><path d="M41 387c2 2 5 2 7 0"/><path d="M41 381.500v.8M48 381.500v.8" stroke-width="2"/>
<path d="M47 449H37a2 2 0 0 0-2 2v16.500a2 2 0 0 0 2 2h7"/><circle cx="49.500" cy="462.500" r="4.500"/><path d="M53 466l3.500 3.500"/>
<path d="M40 524l-5 16c-.3 1 .3 1.500 1 1.500h4M42 524h5v17.500h-5zM49 526h6v15.500h-6z"/>
</g>
<g fill="#2f2f32"><path d="M53 229l1.200 3 3 1.200-3 1.200-1.200 3-1.200-3-3-1.200 3-1.200z"/><path d="M53 302l1.200 3 3 1.200-3 1.200-1.200 3-1.200-3-3-1.200 3-1.200z"/><path d="M53 375l1.200 3 3 1.200-3 1.200-1.200 3-1.200-3-3-1.200 3-1.200z"/><path d="M53 448l1.200 3 3 1.200-3 1.200-1.200 3-1.200-3-3-1.200 3-1.200z"/></g>

<circle cx="45" cy="1063" r="11" fill="#1c1c1e"/><path d="M45 1058v9M41.500 1064l3.500 3.500 3.500-3.500" fill="none" stroke="#fff" stroke-width="1.500" stroke-linecap="round" stroke-linejoin="round"/>
<text x="74" y="1069" font-size="17" fill="#2a2a2e" textLength="118" lengthAdjust="spacingAndGlyphs">Download UPDF</text>
<circle cx="44" cy="1143" r="17" fill="url(#eg)"/><text x="44" y="1150" font-size="18" fill="#fff" text-anchor="middle">E</text>
<text x="74" y="1149" font-size="20" fill="#1f1f22" stroke="#1f1f22" stroke-width=".3" textLength="65" lengthAdjust="spacingAndGlyphs">Eira Ma</text>
<path d="M34 1203l2 5 5 2-5 2-2 5-2-5-5-2 5-2zM42.500 1202l1 2.500 2.500 1-2.500 1-1 2.500-1-2.500-2.500-1 2.500-1z" fill="#6a58e8"/>
<text x="60" y="1216" font-size="17" fill="#7668e0" stroke="#7668e0" stroke-width=".2" textLength="138" lengthAdjust="spacingAndGlyphs">UPDF AI Unlimited</text>

<!-- pdf toolbar -->
<g fill="none" stroke="#2a2a2c" stroke-width="1.500" stroke-linecap="round" stroke-linejoin="round">
<path d="M274 157h9l6 6v14a2.500 2.500 0 0 1-2.500 2.500H274a2.500 2.500 0 0 1-2.500-2.500v-17.500a2.500 2.500 0 0 1 2.500-2.500z"/>
<path d="M274.500 172.500c2-1 4.500-4.500 4.500-8 0-1.500 0-2.500 0-2.500M279 167c1 2 3 4.500 5.500 5M274.500 173c2 .5 5-.5 10-2"/>
<path d="M375 163.500h8M379 159.500v3M376.500 163.500c.5 3 2.700 5 5 6.500M381.500 163.500c-.5 3-2.700 5-5 6.500M388 160h5.500v4"/>
<path d="M378 172h-4.500v6h4.500M385 180l4-10.500 4 10.500M386.500 176.500h5"/>
<path d="M632 165l5 5 5-5" stroke-width="1.700"/>
<path d="M707 159v13M702 167.500l5 5 5-5M697.500 172.500v2.500a2.500 2.500 0 0 0 2.500 2.500h14a2.500 2.500 0 0 0 2.500-2.500v-2.500"/>
<path d="M787 167v3c0 5-4 8-10 8a11 11 0 0 1-4-.8l-4 1.300.8-4a9 9 0 0 1 6.500-14.500h3"/>
<path d="M835 160c3-1.500 6-1.600 9 .5v15c-3-2.100-6-2-9-.5zM844 160.500c3-2.100 6-2 9-.5v15c-3-1.500-6-1.600-9 .5z"/>
<path d="M1345 162l12 12M1357 162l-12 12" stroke-width="1.600"/>
</g>
<g fill="#2a2a2c"><circle cx="773" cy="169" r="1.200"/><circle cx="777" cy="169" r="1.200"/><circle cx="781" cy="169" r="1.200"/><path d="M787 155l1.200 3 3 1.200-3 1.200-1.200 3-1.200-3-3-1.200 3-1.200z"/></g>
<text x="303" y="175" font-size="20" fill="#242428" stroke="#242428" stroke-width=".4" textLength="46" lengthAdjust="spacingAndGlyphs">UP...</text>
<text x="408" y="174" font-size="20" fill="#242428" textLength="206" lengthAdjust="spacingAndGlyphs">Side-by-Side Translation</text>
<path d="M671.500 155v26M741.500 155v26M872.500 154v28M1326.500 155v26" stroke="#dcdcde" stroke-width="1"/>
<text x="889" y="175" font-size="22" fill="#242428" stroke="#242428" stroke-width=".2" textLength="95" lengthAdjust="spacingAndGlyphs">Chat PDF</text>
<text x="1214" y="175" font-size="20" fill="#b5b5b8" textLength="91" lengthAdjust="spacingAndGlyphs">Clear Chat</text>

<!-- zoom bar content -->
<g fill="none" stroke="#222" stroke-width="1.700" stroke-linecap="round">
<circle cx="393" cy="1160" r="7.500"/><path d="M389 1160h8M399 1166l3.500 3.500"/>
<circle cx="541" cy="1160" r="7.500"/><path d="M537 1160h8M541 1156v8M547 1166l3.500 3.500"/>
</g>
<text x="448" y="1165" font-size="20" fill="#333" textLength="38" lengthAdjust="spacingAndGlyphs">56%</text>
<text x="608" y="1166" font-size="20" fill="#222">1</text>
<text x="650" y="1165" font-size="20" fill="#333" textLength="26" lengthAdjust="spacing">/ 2</text>

<!-- modal content -->
<g fill="none" stroke="#6a6fe6" stroke-width="2" stroke-linecap="round" stroke-linejoin="round"><path d="M856 775h12c5 0 8 3 8 8.500v1M863 768.500l-7 6.500 7 6.500"/></g>
<text x="890" y="783" font-size="20" fill="#6a6fe6" stroke="#6a6fe6" stroke-width=".2" textLength="198" lengthAdjust="spacingAndGlyphs">Translate PDF by Page</text>
<text x="873" y="860" font-size="20" fill="#222">1</text>
<text x="1094" y="860" font-size="20" fill="#222">2</text>
<path d="M1047 853h8" stroke="#666" stroke-width="1.500"/>
<g fill="none" stroke-linecap="round" stroke-linejoin="round" stroke-width="1.200">
<path d="M995 844l4.500-4 4.500 4" stroke="#555"/><path d="M995 865l4.500 4 4.500-4" stroke="#bbb"/>
<path d="M1217 844l4.500-4 4.500 4" stroke="#bbb"/><path d="M1217 865l4.500 4 4.500-4" stroke="#555"/>
<path d="M1207 921.500l5.500 5.500 5.500-5.500" stroke="#333" stroke-width="1.500"/>
</g>
<text x="870" y="930" font-size="20" fill="#2a2a2e" textLength="68" lengthAdjust="spacingAndGlyphs">German</text>
<text x="1012" y="1000" font-size="20" fill="#fff" textLength="78" lengthAdjust="spacingAndGlyphs">Translate</text>

<!-- ask content -->
<text x="857" y="1089" font-size="20" fill="#b5b5b8" textLength="126" lengthAdjust="spacingAndGlyphs">Ask something</text>
<g fill="none" stroke="#1f1f22" stroke-width="1.300"><ellipse cx="870" cy="1156.500" rx="8.500" ry="4.500" transform="rotate(45 870 1156.500)"/><ellipse cx="870" cy="1156.500" rx="8.500" ry="4.500" transform="rotate(-45 870 1156.500)"/></g>
<circle cx="870" cy="1156.500" r="1.300" fill="#1f1f22"/>
<text x="888" y="1162" font-size="17" fill="#222" textLength="79" lengthAdjust="spacingAndGlyphs">DeepThink</text>
<g fill="none" stroke="#222" stroke-width="1.500" stroke-linecap="round" stroke-linejoin="round">
<path d="M1248 1145h-11a2 2 0 0 0-2 2v13a2.500 2.500 0 0 0 2.500 2.500h14.500a2.500 2.500 0 0 0 2.500-2.500v-9"/>
<path d="M1239 1162c1-6 6-10 15-11M1245 1162c.5-3 3-6 9-6"/>
</g>
<circle cx="1240" cy="1150" r="1.200" fill="#222"/>
<path d="M1254 1143l1.200 3 3 1.200-3 1.200-1.200 3-1.200-3-3-1.200 3-1.200z" fill="#222"/>
<path d="M1280.500 1143v22" stroke="#d4d4d6"/>
<path d="M1314 1146l18 7.500-18 7.500 2-6.500h7v-2h-7z" fill="#fff"/>
<text x="979" y="1217" font-size="18" fill="#777" textLength="236" lengthAdjust="spacingAndGlyphs">AI-generated, for reference only</text>
</svg>
</div></body></html>
